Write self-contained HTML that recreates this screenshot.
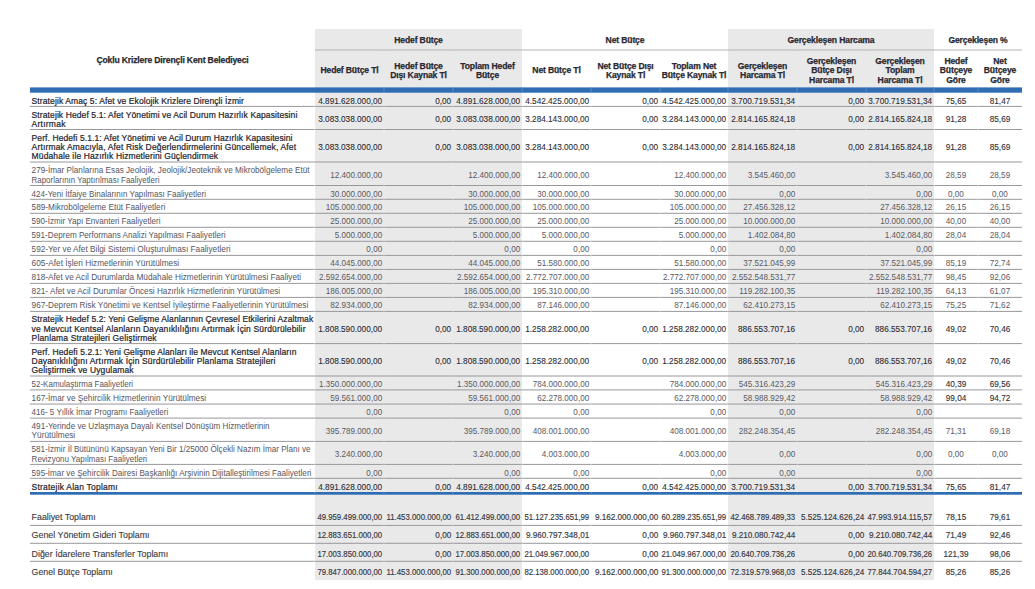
<!DOCTYPE html>
<html><head><meta charset="utf-8"><style>
html,body{margin:0;padding:0;background:#fff;width:1035px;height:589px;overflow:hidden}
svg{display:block;font-family:"Liberation Sans",sans-serif}
</style></head><body>
<svg width="1035" height="589" viewBox="0 0 1035 589" font-family="Liberation Sans, sans-serif">
<rect x="315" y="29" width="207" height="551" fill="#e9e9ea"/>
<rect x="728" y="29" width="206" height="551" fill="#e9e9ea"/>
<rect x="315" y="49.5" width="707" height="1" fill="#b4b4b8"/>
<rect x="383.65" y="49.5" width="0.7" height="1" fill="#e4e4e6"/>
<rect x="452.65" y="49.5" width="0.7" height="1" fill="#e4e4e6"/>
<rect x="521.65" y="49.5" width="0.7" height="1" fill="#e4e4e6"/>
<rect x="590.65" y="49.5" width="0.7" height="1" fill="#e4e4e6"/>
<rect x="659.65" y="49.5" width="0.7" height="1" fill="#e4e4e6"/>
<rect x="727.65" y="49.5" width="0.7" height="1" fill="#e4e4e6"/>
<rect x="796.65" y="49.5" width="0.7" height="1" fill="#e4e4e6"/>
<rect x="865.65" y="49.5" width="0.7" height="1" fill="#e4e4e6"/>
<rect x="933.65" y="49.5" width="0.7" height="1" fill="#e4e4e6"/>
<rect x="977.65" y="49.5" width="0.7" height="1" fill="#e4e4e6"/>
<rect x="30" y="87.4" width="992" height="5.3" fill="#2e6db4"/>
<rect x="383.5" y="87.4" width="1" height="5.3" fill="#5b8ac6"/>
<rect x="452.5" y="87.4" width="1" height="5.3" fill="#5b8ac6"/>
<rect x="521.5" y="87.4" width="1" height="5.3" fill="#5b8ac6"/>
<rect x="590.5" y="87.4" width="1" height="5.3" fill="#5b8ac6"/>
<rect x="659.5" y="87.4" width="1" height="5.3" fill="#5b8ac6"/>
<rect x="727.5" y="87.4" width="1" height="5.3" fill="#5b8ac6"/>
<rect x="796.5" y="87.4" width="1" height="5.3" fill="#5b8ac6"/>
<rect x="865.5" y="87.4" width="1" height="5.3" fill="#5b8ac6"/>
<rect x="933.5" y="87.4" width="1" height="5.3" fill="#5b8ac6"/>
<rect x="977.5" y="87.4" width="1" height="5.3" fill="#5b8ac6"/>
<rect x="30" y="105.9" width="992" height="1" fill="#98989c"/>
<rect x="314.65" y="105.9" width="0.7" height="1" fill="#e4e4e6"/>
<rect x="383.65" y="105.9" width="0.7" height="1" fill="#e4e4e6"/>
<rect x="452.65" y="105.9" width="0.7" height="1" fill="#e4e4e6"/>
<rect x="521.65" y="105.9" width="0.7" height="1" fill="#e4e4e6"/>
<rect x="590.65" y="105.9" width="0.7" height="1" fill="#e4e4e6"/>
<rect x="659.65" y="105.9" width="0.7" height="1" fill="#e4e4e6"/>
<rect x="727.65" y="105.9" width="0.7" height="1" fill="#e4e4e6"/>
<rect x="796.65" y="105.9" width="0.7" height="1" fill="#e4e4e6"/>
<rect x="865.65" y="105.9" width="0.7" height="1" fill="#e4e4e6"/>
<rect x="933.65" y="105.9" width="0.7" height="1" fill="#e4e4e6"/>
<rect x="977.65" y="105.9" width="0.7" height="1" fill="#e4e4e6"/>
<rect x="30" y="129.0" width="992" height="1" fill="#98989c"/>
<rect x="314.65" y="129.0" width="0.7" height="1" fill="#e4e4e6"/>
<rect x="383.65" y="129.0" width="0.7" height="1" fill="#e4e4e6"/>
<rect x="452.65" y="129.0" width="0.7" height="1" fill="#e4e4e6"/>
<rect x="521.65" y="129.0" width="0.7" height="1" fill="#e4e4e6"/>
<rect x="590.65" y="129.0" width="0.7" height="1" fill="#e4e4e6"/>
<rect x="659.65" y="129.0" width="0.7" height="1" fill="#e4e4e6"/>
<rect x="727.65" y="129.0" width="0.7" height="1" fill="#e4e4e6"/>
<rect x="796.65" y="129.0" width="0.7" height="1" fill="#e4e4e6"/>
<rect x="865.65" y="129.0" width="0.7" height="1" fill="#e4e4e6"/>
<rect x="933.65" y="129.0" width="0.7" height="1" fill="#e4e4e6"/>
<rect x="977.65" y="129.0" width="0.7" height="1" fill="#e4e4e6"/>
<rect x="30" y="161.5" width="992" height="1" fill="#98989c"/>
<rect x="314.65" y="161.5" width="0.7" height="1" fill="#e4e4e6"/>
<rect x="383.65" y="161.5" width="0.7" height="1" fill="#e4e4e6"/>
<rect x="452.65" y="161.5" width="0.7" height="1" fill="#e4e4e6"/>
<rect x="521.65" y="161.5" width="0.7" height="1" fill="#e4e4e6"/>
<rect x="590.65" y="161.5" width="0.7" height="1" fill="#e4e4e6"/>
<rect x="659.65" y="161.5" width="0.7" height="1" fill="#e4e4e6"/>
<rect x="727.65" y="161.5" width="0.7" height="1" fill="#e4e4e6"/>
<rect x="796.65" y="161.5" width="0.7" height="1" fill="#e4e4e6"/>
<rect x="865.65" y="161.5" width="0.7" height="1" fill="#e4e4e6"/>
<rect x="933.65" y="161.5" width="0.7" height="1" fill="#e4e4e6"/>
<rect x="977.65" y="161.5" width="0.7" height="1" fill="#e4e4e6"/>
<rect x="30" y="185.0" width="992" height="1" fill="#98989c"/>
<rect x="314.65" y="185.0" width="0.7" height="1" fill="#e4e4e6"/>
<rect x="383.65" y="185.0" width="0.7" height="1" fill="#e4e4e6"/>
<rect x="452.65" y="185.0" width="0.7" height="1" fill="#e4e4e6"/>
<rect x="521.65" y="185.0" width="0.7" height="1" fill="#e4e4e6"/>
<rect x="590.65" y="185.0" width="0.7" height="1" fill="#e4e4e6"/>
<rect x="659.65" y="185.0" width="0.7" height="1" fill="#e4e4e6"/>
<rect x="727.65" y="185.0" width="0.7" height="1" fill="#e4e4e6"/>
<rect x="796.65" y="185.0" width="0.7" height="1" fill="#e4e4e6"/>
<rect x="865.65" y="185.0" width="0.7" height="1" fill="#e4e4e6"/>
<rect x="933.65" y="185.0" width="0.7" height="1" fill="#e4e4e6"/>
<rect x="977.65" y="185.0" width="0.7" height="1" fill="#e4e4e6"/>
<rect x="30" y="198.8" width="992" height="1" fill="#98989c"/>
<rect x="314.65" y="198.8" width="0.7" height="1" fill="#e4e4e6"/>
<rect x="383.65" y="198.8" width="0.7" height="1" fill="#e4e4e6"/>
<rect x="452.65" y="198.8" width="0.7" height="1" fill="#e4e4e6"/>
<rect x="521.65" y="198.8" width="0.7" height="1" fill="#e4e4e6"/>
<rect x="590.65" y="198.8" width="0.7" height="1" fill="#e4e4e6"/>
<rect x="659.65" y="198.8" width="0.7" height="1" fill="#e4e4e6"/>
<rect x="727.65" y="198.8" width="0.7" height="1" fill="#e4e4e6"/>
<rect x="796.65" y="198.8" width="0.7" height="1" fill="#e4e4e6"/>
<rect x="865.65" y="198.8" width="0.7" height="1" fill="#e4e4e6"/>
<rect x="933.65" y="198.8" width="0.7" height="1" fill="#e4e4e6"/>
<rect x="977.65" y="198.8" width="0.7" height="1" fill="#e4e4e6"/>
<rect x="30" y="212.8" width="992" height="1" fill="#98989c"/>
<rect x="314.65" y="212.8" width="0.7" height="1" fill="#e4e4e6"/>
<rect x="383.65" y="212.8" width="0.7" height="1" fill="#e4e4e6"/>
<rect x="452.65" y="212.8" width="0.7" height="1" fill="#e4e4e6"/>
<rect x="521.65" y="212.8" width="0.7" height="1" fill="#e4e4e6"/>
<rect x="590.65" y="212.8" width="0.7" height="1" fill="#e4e4e6"/>
<rect x="659.65" y="212.8" width="0.7" height="1" fill="#e4e4e6"/>
<rect x="727.65" y="212.8" width="0.7" height="1" fill="#e4e4e6"/>
<rect x="796.65" y="212.8" width="0.7" height="1" fill="#e4e4e6"/>
<rect x="865.65" y="212.8" width="0.7" height="1" fill="#e4e4e6"/>
<rect x="933.65" y="212.8" width="0.7" height="1" fill="#e4e4e6"/>
<rect x="977.65" y="212.8" width="0.7" height="1" fill="#e4e4e6"/>
<rect x="30" y="226.8" width="992" height="1" fill="#98989c"/>
<rect x="314.65" y="226.8" width="0.7" height="1" fill="#e4e4e6"/>
<rect x="383.65" y="226.8" width="0.7" height="1" fill="#e4e4e6"/>
<rect x="452.65" y="226.8" width="0.7" height="1" fill="#e4e4e6"/>
<rect x="521.65" y="226.8" width="0.7" height="1" fill="#e4e4e6"/>
<rect x="590.65" y="226.8" width="0.7" height="1" fill="#e4e4e6"/>
<rect x="659.65" y="226.8" width="0.7" height="1" fill="#e4e4e6"/>
<rect x="727.65" y="226.8" width="0.7" height="1" fill="#e4e4e6"/>
<rect x="796.65" y="226.8" width="0.7" height="1" fill="#e4e4e6"/>
<rect x="865.65" y="226.8" width="0.7" height="1" fill="#e4e4e6"/>
<rect x="933.65" y="226.8" width="0.7" height="1" fill="#e4e4e6"/>
<rect x="977.65" y="226.8" width="0.7" height="1" fill="#e4e4e6"/>
<rect x="30" y="240.8" width="992" height="1" fill="#98989c"/>
<rect x="314.65" y="240.8" width="0.7" height="1" fill="#e4e4e6"/>
<rect x="383.65" y="240.8" width="0.7" height="1" fill="#e4e4e6"/>
<rect x="452.65" y="240.8" width="0.7" height="1" fill="#e4e4e6"/>
<rect x="521.65" y="240.8" width="0.7" height="1" fill="#e4e4e6"/>
<rect x="590.65" y="240.8" width="0.7" height="1" fill="#e4e4e6"/>
<rect x="659.65" y="240.8" width="0.7" height="1" fill="#e4e4e6"/>
<rect x="727.65" y="240.8" width="0.7" height="1" fill="#e4e4e6"/>
<rect x="796.65" y="240.8" width="0.7" height="1" fill="#e4e4e6"/>
<rect x="865.65" y="240.8" width="0.7" height="1" fill="#e4e4e6"/>
<rect x="933.65" y="240.8" width="0.7" height="1" fill="#e4e4e6"/>
<rect x="977.65" y="240.8" width="0.7" height="1" fill="#e4e4e6"/>
<rect x="30" y="254.9" width="992" height="1" fill="#98989c"/>
<rect x="314.65" y="254.9" width="0.7" height="1" fill="#e4e4e6"/>
<rect x="383.65" y="254.9" width="0.7" height="1" fill="#e4e4e6"/>
<rect x="452.65" y="254.9" width="0.7" height="1" fill="#e4e4e6"/>
<rect x="521.65" y="254.9" width="0.7" height="1" fill="#e4e4e6"/>
<rect x="590.65" y="254.9" width="0.7" height="1" fill="#e4e4e6"/>
<rect x="659.65" y="254.9" width="0.7" height="1" fill="#e4e4e6"/>
<rect x="727.65" y="254.9" width="0.7" height="1" fill="#e4e4e6"/>
<rect x="796.65" y="254.9" width="0.7" height="1" fill="#e4e4e6"/>
<rect x="865.65" y="254.9" width="0.7" height="1" fill="#e4e4e6"/>
<rect x="933.65" y="254.9" width="0.7" height="1" fill="#e4e4e6"/>
<rect x="977.65" y="254.9" width="0.7" height="1" fill="#e4e4e6"/>
<rect x="30" y="268.9" width="992" height="1" fill="#98989c"/>
<rect x="314.65" y="268.9" width="0.7" height="1" fill="#e4e4e6"/>
<rect x="383.65" y="268.9" width="0.7" height="1" fill="#e4e4e6"/>
<rect x="452.65" y="268.9" width="0.7" height="1" fill="#e4e4e6"/>
<rect x="521.65" y="268.9" width="0.7" height="1" fill="#e4e4e6"/>
<rect x="590.65" y="268.9" width="0.7" height="1" fill="#e4e4e6"/>
<rect x="659.65" y="268.9" width="0.7" height="1" fill="#e4e4e6"/>
<rect x="727.65" y="268.9" width="0.7" height="1" fill="#e4e4e6"/>
<rect x="796.65" y="268.9" width="0.7" height="1" fill="#e4e4e6"/>
<rect x="865.65" y="268.9" width="0.7" height="1" fill="#e4e4e6"/>
<rect x="933.65" y="268.9" width="0.7" height="1" fill="#e4e4e6"/>
<rect x="977.65" y="268.9" width="0.7" height="1" fill="#e4e4e6"/>
<rect x="30" y="282.9" width="992" height="1" fill="#98989c"/>
<rect x="314.65" y="282.9" width="0.7" height="1" fill="#e4e4e6"/>
<rect x="383.65" y="282.9" width="0.7" height="1" fill="#e4e4e6"/>
<rect x="452.65" y="282.9" width="0.7" height="1" fill="#e4e4e6"/>
<rect x="521.65" y="282.9" width="0.7" height="1" fill="#e4e4e6"/>
<rect x="590.65" y="282.9" width="0.7" height="1" fill="#e4e4e6"/>
<rect x="659.65" y="282.9" width="0.7" height="1" fill="#e4e4e6"/>
<rect x="727.65" y="282.9" width="0.7" height="1" fill="#e4e4e6"/>
<rect x="796.65" y="282.9" width="0.7" height="1" fill="#e4e4e6"/>
<rect x="865.65" y="282.9" width="0.7" height="1" fill="#e4e4e6"/>
<rect x="933.65" y="282.9" width="0.7" height="1" fill="#e4e4e6"/>
<rect x="977.65" y="282.9" width="0.7" height="1" fill="#e4e4e6"/>
<rect x="30" y="296.9" width="992" height="1" fill="#98989c"/>
<rect x="314.65" y="296.9" width="0.7" height="1" fill="#e4e4e6"/>
<rect x="383.65" y="296.9" width="0.7" height="1" fill="#e4e4e6"/>
<rect x="452.65" y="296.9" width="0.7" height="1" fill="#e4e4e6"/>
<rect x="521.65" y="296.9" width="0.7" height="1" fill="#e4e4e6"/>
<rect x="590.65" y="296.9" width="0.7" height="1" fill="#e4e4e6"/>
<rect x="659.65" y="296.9" width="0.7" height="1" fill="#e4e4e6"/>
<rect x="727.65" y="296.9" width="0.7" height="1" fill="#e4e4e6"/>
<rect x="796.65" y="296.9" width="0.7" height="1" fill="#e4e4e6"/>
<rect x="865.65" y="296.9" width="0.7" height="1" fill="#e4e4e6"/>
<rect x="933.65" y="296.9" width="0.7" height="1" fill="#e4e4e6"/>
<rect x="977.65" y="296.9" width="0.7" height="1" fill="#e4e4e6"/>
<rect x="30" y="310.9" width="992" height="1" fill="#98989c"/>
<rect x="314.65" y="310.9" width="0.7" height="1" fill="#e4e4e6"/>
<rect x="383.65" y="310.9" width="0.7" height="1" fill="#e4e4e6"/>
<rect x="452.65" y="310.9" width="0.7" height="1" fill="#e4e4e6"/>
<rect x="521.65" y="310.9" width="0.7" height="1" fill="#e4e4e6"/>
<rect x="590.65" y="310.9" width="0.7" height="1" fill="#e4e4e6"/>
<rect x="659.65" y="310.9" width="0.7" height="1" fill="#e4e4e6"/>
<rect x="727.65" y="310.9" width="0.7" height="1" fill="#e4e4e6"/>
<rect x="796.65" y="310.9" width="0.7" height="1" fill="#e4e4e6"/>
<rect x="865.65" y="310.9" width="0.7" height="1" fill="#e4e4e6"/>
<rect x="933.65" y="310.9" width="0.7" height="1" fill="#e4e4e6"/>
<rect x="977.65" y="310.9" width="0.7" height="1" fill="#e4e4e6"/>
<rect x="30" y="343.1" width="992" height="1" fill="#98989c"/>
<rect x="314.65" y="343.1" width="0.7" height="1" fill="#e4e4e6"/>
<rect x="383.65" y="343.1" width="0.7" height="1" fill="#e4e4e6"/>
<rect x="452.65" y="343.1" width="0.7" height="1" fill="#e4e4e6"/>
<rect x="521.65" y="343.1" width="0.7" height="1" fill="#e4e4e6"/>
<rect x="590.65" y="343.1" width="0.7" height="1" fill="#e4e4e6"/>
<rect x="659.65" y="343.1" width="0.7" height="1" fill="#e4e4e6"/>
<rect x="727.65" y="343.1" width="0.7" height="1" fill="#e4e4e6"/>
<rect x="796.65" y="343.1" width="0.7" height="1" fill="#e4e4e6"/>
<rect x="865.65" y="343.1" width="0.7" height="1" fill="#e4e4e6"/>
<rect x="933.65" y="343.1" width="0.7" height="1" fill="#e4e4e6"/>
<rect x="977.65" y="343.1" width="0.7" height="1" fill="#e4e4e6"/>
<rect x="30" y="375.5" width="992" height="1" fill="#98989c"/>
<rect x="314.65" y="375.5" width="0.7" height="1" fill="#e4e4e6"/>
<rect x="383.65" y="375.5" width="0.7" height="1" fill="#e4e4e6"/>
<rect x="452.65" y="375.5" width="0.7" height="1" fill="#e4e4e6"/>
<rect x="521.65" y="375.5" width="0.7" height="1" fill="#e4e4e6"/>
<rect x="590.65" y="375.5" width="0.7" height="1" fill="#e4e4e6"/>
<rect x="659.65" y="375.5" width="0.7" height="1" fill="#e4e4e6"/>
<rect x="727.65" y="375.5" width="0.7" height="1" fill="#e4e4e6"/>
<rect x="796.65" y="375.5" width="0.7" height="1" fill="#e4e4e6"/>
<rect x="865.65" y="375.5" width="0.7" height="1" fill="#e4e4e6"/>
<rect x="933.65" y="375.5" width="0.7" height="1" fill="#e4e4e6"/>
<rect x="977.65" y="375.5" width="0.7" height="1" fill="#e4e4e6"/>
<rect x="30" y="389.4" width="992" height="1" fill="#98989c"/>
<rect x="314.65" y="389.4" width="0.7" height="1" fill="#e4e4e6"/>
<rect x="383.65" y="389.4" width="0.7" height="1" fill="#e4e4e6"/>
<rect x="452.65" y="389.4" width="0.7" height="1" fill="#e4e4e6"/>
<rect x="521.65" y="389.4" width="0.7" height="1" fill="#e4e4e6"/>
<rect x="590.65" y="389.4" width="0.7" height="1" fill="#e4e4e6"/>
<rect x="659.65" y="389.4" width="0.7" height="1" fill="#e4e4e6"/>
<rect x="727.65" y="389.4" width="0.7" height="1" fill="#e4e4e6"/>
<rect x="796.65" y="389.4" width="0.7" height="1" fill="#e4e4e6"/>
<rect x="865.65" y="389.4" width="0.7" height="1" fill="#e4e4e6"/>
<rect x="933.65" y="389.4" width="0.7" height="1" fill="#e4e4e6"/>
<rect x="977.65" y="389.4" width="0.7" height="1" fill="#e4e4e6"/>
<rect x="30" y="403.55" width="992" height="1" fill="#98989c"/>
<rect x="314.65" y="403.55" width="0.7" height="1" fill="#e4e4e6"/>
<rect x="383.65" y="403.55" width="0.7" height="1" fill="#e4e4e6"/>
<rect x="452.65" y="403.55" width="0.7" height="1" fill="#e4e4e6"/>
<rect x="521.65" y="403.55" width="0.7" height="1" fill="#e4e4e6"/>
<rect x="590.65" y="403.55" width="0.7" height="1" fill="#e4e4e6"/>
<rect x="659.65" y="403.55" width="0.7" height="1" fill="#e4e4e6"/>
<rect x="727.65" y="403.55" width="0.7" height="1" fill="#e4e4e6"/>
<rect x="796.65" y="403.55" width="0.7" height="1" fill="#e4e4e6"/>
<rect x="865.65" y="403.55" width="0.7" height="1" fill="#e4e4e6"/>
<rect x="933.65" y="403.55" width="0.7" height="1" fill="#e4e4e6"/>
<rect x="977.65" y="403.55" width="0.7" height="1" fill="#e4e4e6"/>
<rect x="30" y="417.6" width="992" height="1" fill="#98989c"/>
<rect x="314.65" y="417.6" width="0.7" height="1" fill="#e4e4e6"/>
<rect x="383.65" y="417.6" width="0.7" height="1" fill="#e4e4e6"/>
<rect x="452.65" y="417.6" width="0.7" height="1" fill="#e4e4e6"/>
<rect x="521.65" y="417.6" width="0.7" height="1" fill="#e4e4e6"/>
<rect x="590.65" y="417.6" width="0.7" height="1" fill="#e4e4e6"/>
<rect x="659.65" y="417.6" width="0.7" height="1" fill="#e4e4e6"/>
<rect x="727.65" y="417.6" width="0.7" height="1" fill="#e4e4e6"/>
<rect x="796.65" y="417.6" width="0.7" height="1" fill="#e4e4e6"/>
<rect x="865.65" y="417.6" width="0.7" height="1" fill="#e4e4e6"/>
<rect x="933.65" y="417.6" width="0.7" height="1" fill="#e4e4e6"/>
<rect x="977.65" y="417.6" width="0.7" height="1" fill="#e4e4e6"/>
<rect x="30" y="440.9" width="992" height="1" fill="#98989c"/>
<rect x="314.65" y="440.9" width="0.7" height="1" fill="#e4e4e6"/>
<rect x="383.65" y="440.9" width="0.7" height="1" fill="#e4e4e6"/>
<rect x="452.65" y="440.9" width="0.7" height="1" fill="#e4e4e6"/>
<rect x="521.65" y="440.9" width="0.7" height="1" fill="#e4e4e6"/>
<rect x="590.65" y="440.9" width="0.7" height="1" fill="#e4e4e6"/>
<rect x="659.65" y="440.9" width="0.7" height="1" fill="#e4e4e6"/>
<rect x="727.65" y="440.9" width="0.7" height="1" fill="#e4e4e6"/>
<rect x="796.65" y="440.9" width="0.7" height="1" fill="#e4e4e6"/>
<rect x="865.65" y="440.9" width="0.7" height="1" fill="#e4e4e6"/>
<rect x="933.65" y="440.9" width="0.7" height="1" fill="#e4e4e6"/>
<rect x="977.65" y="440.9" width="0.7" height="1" fill="#e4e4e6"/>
<rect x="30" y="463.9" width="992" height="1" fill="#98989c"/>
<rect x="314.65" y="463.9" width="0.7" height="1" fill="#e4e4e6"/>
<rect x="383.65" y="463.9" width="0.7" height="1" fill="#e4e4e6"/>
<rect x="452.65" y="463.9" width="0.7" height="1" fill="#e4e4e6"/>
<rect x="521.65" y="463.9" width="0.7" height="1" fill="#e4e4e6"/>
<rect x="590.65" y="463.9" width="0.7" height="1" fill="#e4e4e6"/>
<rect x="659.65" y="463.9" width="0.7" height="1" fill="#e4e4e6"/>
<rect x="727.65" y="463.9" width="0.7" height="1" fill="#e4e4e6"/>
<rect x="796.65" y="463.9" width="0.7" height="1" fill="#e4e4e6"/>
<rect x="865.65" y="463.9" width="0.7" height="1" fill="#e4e4e6"/>
<rect x="933.65" y="463.9" width="0.7" height="1" fill="#e4e4e6"/>
<rect x="977.65" y="463.9" width="0.7" height="1" fill="#e4e4e6"/>
<rect x="30" y="477.8" width="992" height="1" fill="#98989c"/>
<rect x="314.65" y="477.8" width="0.7" height="1" fill="#e4e4e6"/>
<rect x="383.65" y="477.8" width="0.7" height="1" fill="#e4e4e6"/>
<rect x="452.65" y="477.8" width="0.7" height="1" fill="#e4e4e6"/>
<rect x="521.65" y="477.8" width="0.7" height="1" fill="#e4e4e6"/>
<rect x="590.65" y="477.8" width="0.7" height="1" fill="#e4e4e6"/>
<rect x="659.65" y="477.8" width="0.7" height="1" fill="#e4e4e6"/>
<rect x="727.65" y="477.8" width="0.7" height="1" fill="#e4e4e6"/>
<rect x="796.65" y="477.8" width="0.7" height="1" fill="#e4e4e6"/>
<rect x="865.65" y="477.8" width="0.7" height="1" fill="#e4e4e6"/>
<rect x="933.65" y="477.8" width="0.7" height="1" fill="#e4e4e6"/>
<rect x="977.65" y="477.8" width="0.7" height="1" fill="#e4e4e6"/>
<rect x="30" y="524.9" width="992" height="1" fill="#98989c"/>
<rect x="314.65" y="524.9" width="0.7" height="1" fill="#e4e4e6"/>
<rect x="383.65" y="524.9" width="0.7" height="1" fill="#e4e4e6"/>
<rect x="452.65" y="524.9" width="0.7" height="1" fill="#e4e4e6"/>
<rect x="521.65" y="524.9" width="0.7" height="1" fill="#e4e4e6"/>
<rect x="590.65" y="524.9" width="0.7" height="1" fill="#e4e4e6"/>
<rect x="659.65" y="524.9" width="0.7" height="1" fill="#e4e4e6"/>
<rect x="727.65" y="524.9" width="0.7" height="1" fill="#e4e4e6"/>
<rect x="796.65" y="524.9" width="0.7" height="1" fill="#e4e4e6"/>
<rect x="865.65" y="524.9" width="0.7" height="1" fill="#e4e4e6"/>
<rect x="933.65" y="524.9" width="0.7" height="1" fill="#e4e4e6"/>
<rect x="977.65" y="524.9" width="0.7" height="1" fill="#e4e4e6"/>
<rect x="30" y="542.8" width="992" height="1" fill="#98989c"/>
<rect x="314.65" y="542.8" width="0.7" height="1" fill="#e4e4e6"/>
<rect x="383.65" y="542.8" width="0.7" height="1" fill="#e4e4e6"/>
<rect x="452.65" y="542.8" width="0.7" height="1" fill="#e4e4e6"/>
<rect x="521.65" y="542.8" width="0.7" height="1" fill="#e4e4e6"/>
<rect x="590.65" y="542.8" width="0.7" height="1" fill="#e4e4e6"/>
<rect x="659.65" y="542.8" width="0.7" height="1" fill="#e4e4e6"/>
<rect x="727.65" y="542.8" width="0.7" height="1" fill="#e4e4e6"/>
<rect x="796.65" y="542.8" width="0.7" height="1" fill="#e4e4e6"/>
<rect x="865.65" y="542.8" width="0.7" height="1" fill="#e4e4e6"/>
<rect x="933.65" y="542.8" width="0.7" height="1" fill="#e4e4e6"/>
<rect x="977.65" y="542.8" width="0.7" height="1" fill="#e4e4e6"/>
<rect x="30" y="560.8" width="992" height="1" fill="#98989c"/>
<rect x="314.65" y="560.8" width="0.7" height="1" fill="#e4e4e6"/>
<rect x="383.65" y="560.8" width="0.7" height="1" fill="#e4e4e6"/>
<rect x="452.65" y="560.8" width="0.7" height="1" fill="#e4e4e6"/>
<rect x="521.65" y="560.8" width="0.7" height="1" fill="#e4e4e6"/>
<rect x="590.65" y="560.8" width="0.7" height="1" fill="#e4e4e6"/>
<rect x="659.65" y="560.8" width="0.7" height="1" fill="#e4e4e6"/>
<rect x="727.65" y="560.8" width="0.7" height="1" fill="#e4e4e6"/>
<rect x="796.65" y="560.8" width="0.7" height="1" fill="#e4e4e6"/>
<rect x="865.65" y="560.8" width="0.7" height="1" fill="#e4e4e6"/>
<rect x="933.65" y="560.8" width="0.7" height="1" fill="#e4e4e6"/>
<rect x="977.65" y="560.8" width="0.7" height="1" fill="#e4e4e6"/>
<rect x="30" y="492" width="992" height="2.7" fill="#2e6db4"/>
<rect x="314.6" y="492" width="0.8" height="2.7" fill="#5b8ac6"/>
<rect x="383.6" y="492" width="0.8" height="2.7" fill="#5b8ac6"/>
<rect x="452.6" y="492" width="0.8" height="2.7" fill="#5b8ac6"/>
<rect x="521.6" y="492" width="0.8" height="2.7" fill="#5b8ac6"/>
<rect x="590.6" y="492" width="0.8" height="2.7" fill="#5b8ac6"/>
<rect x="659.6" y="492" width="0.8" height="2.7" fill="#5b8ac6"/>
<rect x="727.6" y="492" width="0.8" height="2.7" fill="#5b8ac6"/>
<rect x="796.6" y="492" width="0.8" height="2.7" fill="#5b8ac6"/>
<rect x="865.6" y="492" width="0.8" height="2.7" fill="#5b8ac6"/>
<rect x="933.6" y="492" width="0.8" height="2.7" fill="#5b8ac6"/>
<rect x="977.6" y="492" width="0.8" height="2.7" fill="#5b8ac6"/>
<text x="172.50" y="63" font-size="8.6" fill="#2a2a32" text-anchor="middle" font-weight="bold" stroke="#2a2a32" stroke-width="0.25" letter-spacing="-0.15">Çoklu Krizlere Dirençli Kent Belediyeci</text>
<text x="418.50" y="43" font-size="8.6" fill="#2a2a32" text-anchor="middle" font-weight="bold" stroke="#2a2a32" stroke-width="0.25" letter-spacing="-0.15">Hedef Bütçe</text>
<text x="625.00" y="43" font-size="8.6" fill="#2a2a32" text-anchor="middle" font-weight="bold" stroke="#2a2a32" stroke-width="0.25" letter-spacing="-0.15">Net Bütçe</text>
<text x="831.00" y="43" font-size="8.6" fill="#2a2a32" text-anchor="middle" font-weight="bold" stroke="#2a2a32" stroke-width="0.25" letter-spacing="-0.15">Gerçekleşen Harcama</text>
<text x="978.00" y="43" font-size="8.6" fill="#2a2a32" text-anchor="middle" font-weight="bold" stroke="#2a2a32" stroke-width="0.25" letter-spacing="-0.15">Gerçekleşen %</text>
<text x="349.50" y="73" font-size="8.6" fill="#2a2a32" text-anchor="middle" font-weight="bold" stroke="#2a2a32" stroke-width="0.25" letter-spacing="-0.15">Hedef Bütçe Tl</text>
<text x="418.50" y="69" font-size="8.6" fill="#2a2a32" text-anchor="middle" font-weight="bold" stroke="#2a2a32" stroke-width="0.25" letter-spacing="-0.15">Hedef Bütçe</text>
<text x="418.50" y="78" font-size="8.6" fill="#2a2a32" text-anchor="middle" font-weight="bold" stroke="#2a2a32" stroke-width="0.25" letter-spacing="-0.15">Dışı Kaynak Tl</text>
<text x="487.50" y="69" font-size="8.6" fill="#2a2a32" text-anchor="middle" font-weight="bold" stroke="#2a2a32" stroke-width="0.25" letter-spacing="-0.15">Toplam Hedef</text>
<text x="487.50" y="78" font-size="8.6" fill="#2a2a32" text-anchor="middle" font-weight="bold" stroke="#2a2a32" stroke-width="0.25" letter-spacing="-0.15">Bütçe</text>
<text x="556.50" y="73" font-size="8.6" fill="#2a2a32" text-anchor="middle" font-weight="bold" stroke="#2a2a32" stroke-width="0.25" letter-spacing="-0.15">Net Bütçe Tl</text>
<text x="625.50" y="69" font-size="8.6" fill="#2a2a32" text-anchor="middle" font-weight="bold" stroke="#2a2a32" stroke-width="0.25" letter-spacing="-0.15">Net Bütçe Dışı</text>
<text x="625.50" y="78" font-size="8.6" fill="#2a2a32" text-anchor="middle" font-weight="bold" stroke="#2a2a32" stroke-width="0.25" letter-spacing="-0.15">Kaynak Tl</text>
<text x="694.00" y="69" font-size="8.6" fill="#2a2a32" text-anchor="middle" font-weight="bold" stroke="#2a2a32" stroke-width="0.25" letter-spacing="-0.15">Toplam Net</text>
<text x="694.00" y="78" font-size="8.6" fill="#2a2a32" text-anchor="middle" font-weight="bold" stroke="#2a2a32" stroke-width="0.25" letter-spacing="-0.15">Bütçe Kaynak Tl</text>
<text x="762.50" y="69" font-size="8.6" fill="#2a2a32" text-anchor="middle" font-weight="bold" stroke="#2a2a32" stroke-width="0.25" letter-spacing="-0.15">Gerçekleşen</text>
<text x="762.50" y="78" font-size="8.6" fill="#2a2a32" text-anchor="middle" font-weight="bold" stroke="#2a2a32" stroke-width="0.25" letter-spacing="-0.15">Harcama Tl</text>
<text x="831.50" y="64" font-size="8.6" fill="#2a2a32" text-anchor="middle" font-weight="bold" stroke="#2a2a32" stroke-width="0.25" letter-spacing="-0.15">Gerçekleşen</text>
<text x="831.50" y="73" font-size="8.6" fill="#2a2a32" text-anchor="middle" font-weight="bold" stroke="#2a2a32" stroke-width="0.25" letter-spacing="-0.15">Bütçe Dışı</text>
<text x="831.50" y="83" font-size="8.6" fill="#2a2a32" text-anchor="middle" font-weight="bold" stroke="#2a2a32" stroke-width="0.25" letter-spacing="-0.15">Harcama Tl</text>
<text x="900.00" y="64" font-size="8.6" fill="#2a2a32" text-anchor="middle" font-weight="bold" stroke="#2a2a32" stroke-width="0.25" letter-spacing="-0.15">Gerçekleşen</text>
<text x="900.00" y="73" font-size="8.6" fill="#2a2a32" text-anchor="middle" font-weight="bold" stroke="#2a2a32" stroke-width="0.25" letter-spacing="-0.15">Toplam</text>
<text x="900.00" y="83" font-size="8.6" fill="#2a2a32" text-anchor="middle" font-weight="bold" stroke="#2a2a32" stroke-width="0.25" letter-spacing="-0.15">Harcama Tl</text>
<text x="956.00" y="64" font-size="8.6" fill="#2a2a32" text-anchor="middle" font-weight="bold" stroke="#2a2a32" stroke-width="0.25" letter-spacing="-0.15">Hedef</text>
<text x="956.00" y="73" font-size="8.6" fill="#2a2a32" text-anchor="middle" font-weight="bold" stroke="#2a2a32" stroke-width="0.25" letter-spacing="-0.15">Bütçeye</text>
<text x="956.00" y="83" font-size="8.6" fill="#2a2a32" text-anchor="middle" font-weight="bold" stroke="#2a2a32" stroke-width="0.25" letter-spacing="-0.15">Göre</text>
<text x="1000.00" y="64" font-size="8.6" fill="#2a2a32" text-anchor="middle" font-weight="bold" stroke="#2a2a32" stroke-width="0.25" letter-spacing="-0.15">Net</text>
<text x="1000.00" y="73" font-size="8.6" fill="#2a2a32" text-anchor="middle" font-weight="bold" stroke="#2a2a32" stroke-width="0.25" letter-spacing="-0.15">Bütçeye</text>
<text x="1000.00" y="83" font-size="8.6" fill="#2a2a32" text-anchor="middle" font-weight="bold" stroke="#2a2a32" stroke-width="0.25" letter-spacing="-0.15">Göre</text>
<text x="31.60" y="104" font-size="8.5" fill="#26262e" stroke="#26262e" stroke-width="0.22" textLength="212.30" lengthAdjust="spacing">Stratejik Amaç 5: Afet ve Ekolojik Krizlere Dirençli İzmir</text>
<text x="382.20" y="104" font-size="8.23" fill="#2d2d35" text-anchor="end" stroke="#2d2d35" stroke-width="0.1">4.891.628.000,00</text>
<text x="451.20" y="104" font-size="8.23" fill="#2d2d35" text-anchor="end" stroke="#2d2d35" stroke-width="0.1">0,00</text>
<text x="520.20" y="104" font-size="8.23" fill="#2d2d35" text-anchor="end" stroke="#2d2d35" stroke-width="0.1">4.891.628.000,00</text>
<text x="589.20" y="104" font-size="8.23" fill="#2d2d35" text-anchor="end" stroke="#2d2d35" stroke-width="0.1">4.542.425.000,00</text>
<text x="658.20" y="104" font-size="8.23" fill="#2d2d35" text-anchor="end" stroke="#2d2d35" stroke-width="0.1">0,00</text>
<text x="726.20" y="104" font-size="8.23" fill="#2d2d35" text-anchor="end" stroke="#2d2d35" stroke-width="0.1">4.542.425.000,00</text>
<text x="795.20" y="104" font-size="8.23" fill="#2d2d35" text-anchor="end" stroke="#2d2d35" stroke-width="0.1">3.700.719.531,34</text>
<text x="864.20" y="104" font-size="8.23" fill="#2d2d35" text-anchor="end" stroke="#2d2d35" stroke-width="0.1">0,00</text>
<text x="932.20" y="104" font-size="8.23" fill="#2d2d35" text-anchor="end" stroke="#2d2d35" stroke-width="0.1">3.700.719.531,34</text>
<text x="956.00" y="104" font-size="8.23" fill="#2d2d35" text-anchor="middle" stroke="#2d2d35" stroke-width="0.1">75,65</text>
<text x="1000.00" y="104" font-size="8.23" fill="#2d2d35" text-anchor="middle" stroke="#2d2d35" stroke-width="0.1">81,47</text>
<text x="31.60" y="118" font-size="8.5" fill="#26262e" stroke="#26262e" stroke-width="0.22" textLength="265.70" lengthAdjust="spacing">Stratejik Hedef 5.1: Afet Yönetimi ve Acil Durum Hazırlık Kapasitesini</text>
<text x="31.60" y="127" font-size="8.5" fill="#26262e" stroke="#26262e" stroke-width="0.22" textLength="33.80" lengthAdjust="spacing">Artırmak</text>
<text x="382.20" y="122" font-size="8.23" fill="#2d2d35" text-anchor="end" stroke="#2d2d35" stroke-width="0.1">3.083.038.000,00</text>
<text x="451.20" y="122" font-size="8.23" fill="#2d2d35" text-anchor="end" stroke="#2d2d35" stroke-width="0.1">0,00</text>
<text x="520.20" y="122" font-size="8.23" fill="#2d2d35" text-anchor="end" stroke="#2d2d35" stroke-width="0.1">3.083.038.000,00</text>
<text x="589.20" y="122" font-size="8.23" fill="#2d2d35" text-anchor="end" stroke="#2d2d35" stroke-width="0.1">3.284.143.000,00</text>
<text x="658.20" y="122" font-size="8.23" fill="#2d2d35" text-anchor="end" stroke="#2d2d35" stroke-width="0.1">0,00</text>
<text x="726.20" y="122" font-size="8.23" fill="#2d2d35" text-anchor="end" stroke="#2d2d35" stroke-width="0.1">3.284.143.000,00</text>
<text x="795.20" y="122" font-size="8.23" fill="#2d2d35" text-anchor="end" stroke="#2d2d35" stroke-width="0.1">2.814.165.824,18</text>
<text x="864.20" y="122" font-size="8.23" fill="#2d2d35" text-anchor="end" stroke="#2d2d35" stroke-width="0.1">0,00</text>
<text x="932.20" y="122" font-size="8.23" fill="#2d2d35" text-anchor="end" stroke="#2d2d35" stroke-width="0.1">2.814.165.824,18</text>
<text x="956.00" y="122" font-size="8.23" fill="#2d2d35" text-anchor="middle" stroke="#2d2d35" stroke-width="0.1">91,28</text>
<text x="1000.00" y="122" font-size="8.23" fill="#2d2d35" text-anchor="middle" stroke="#2d2d35" stroke-width="0.1">85,69</text>
<text x="31.60" y="141" font-size="8.5" fill="#26262e" stroke="#26262e" stroke-width="0.22" textLength="260.80" lengthAdjust="spacing">Perf. Hedefi 5.1.1: Afet Yönetimi ve Acil Durum Hazırlık Kapasitesini</text>
<text x="31.60" y="150" font-size="8.5" fill="#26262e" stroke="#26262e" stroke-width="0.22" textLength="264.50" lengthAdjust="spacing">Artırmak Amacıyla, Afet Risk Değerlendirmelerini Güncellemek, Afet</text>
<text x="31.60" y="159" font-size="8.5" fill="#26262e" stroke="#26262e" stroke-width="0.22" textLength="186.40" lengthAdjust="spacing">Müdahale ile Hazırlık Hizmetlerini Güçlendirmek</text>
<text x="382.20" y="150" font-size="8.23" fill="#2d2d35" text-anchor="end" stroke="#2d2d35" stroke-width="0.1">3.083.038.000,00</text>
<text x="451.20" y="150" font-size="8.23" fill="#2d2d35" text-anchor="end" stroke="#2d2d35" stroke-width="0.1">0,00</text>
<text x="520.20" y="150" font-size="8.23" fill="#2d2d35" text-anchor="end" stroke="#2d2d35" stroke-width="0.1">3.083.038.000,00</text>
<text x="589.20" y="150" font-size="8.23" fill="#2d2d35" text-anchor="end" stroke="#2d2d35" stroke-width="0.1">3.284.143.000,00</text>
<text x="658.20" y="150" font-size="8.23" fill="#2d2d35" text-anchor="end" stroke="#2d2d35" stroke-width="0.1">0,00</text>
<text x="726.20" y="150" font-size="8.23" fill="#2d2d35" text-anchor="end" stroke="#2d2d35" stroke-width="0.1">3.284.143.000,00</text>
<text x="795.20" y="150" font-size="8.23" fill="#2d2d35" text-anchor="end" stroke="#2d2d35" stroke-width="0.1">2.814.165.824,18</text>
<text x="864.20" y="150" font-size="8.23" fill="#2d2d35" text-anchor="end" stroke="#2d2d35" stroke-width="0.1">0,00</text>
<text x="932.20" y="150" font-size="8.23" fill="#2d2d35" text-anchor="end" stroke="#2d2d35" stroke-width="0.1">2.814.165.824,18</text>
<text x="956.00" y="150" font-size="8.23" fill="#2d2d35" text-anchor="middle" stroke="#2d2d35" stroke-width="0.1">91,28</text>
<text x="1000.00" y="150" font-size="8.23" fill="#2d2d35" text-anchor="middle" stroke="#2d2d35" stroke-width="0.1">85,69</text>
<text x="31.60" y="173" font-size="8.15" fill="#55555f" textLength="277.90" lengthAdjust="spacingAndGlyphs">279-İmar Planlarına Esas Jeolojik, Jeolojik/Jeoteknik ve Mikrobölgeleme Etüt</text>
<text x="31.60" y="183" font-size="8.15" fill="#55555f" textLength="127.80" lengthAdjust="spacingAndGlyphs">Raporlarının Yaptırılması Faaliyetleri</text>
<text x="382.20" y="178" font-size="8.15" fill="#5a5a62" text-anchor="end">12.400.000,00</text>
<text x="520.20" y="178" font-size="8.15" fill="#5a5a62" text-anchor="end">12.400.000,00</text>
<text x="589.20" y="178" font-size="8.15" fill="#5a5a62" text-anchor="end">12.400.000,00</text>
<text x="726.20" y="178" font-size="8.15" fill="#5a5a62" text-anchor="end">12.400.000,00</text>
<text x="795.20" y="178" font-size="8.15" fill="#5a5a62" text-anchor="end">3.545.460,00</text>
<text x="932.20" y="178" font-size="8.15" fill="#5a5a62" text-anchor="end">3.545.460,00</text>
<text x="956.00" y="178" font-size="8.15" fill="#5a5a62" text-anchor="middle">28,59</text>
<text x="1000.00" y="178" font-size="8.15" fill="#5a5a62" text-anchor="middle">28,59</text>
<text x="31.60" y="197" font-size="8.15" fill="#55555f" textLength="174.40" lengthAdjust="spacingAndGlyphs">424-Yeni İtfaiye Binalarının Yapılması Faaliyetleri</text>
<text x="382.20" y="197" font-size="8.15" fill="#5a5a62" text-anchor="end">30.000.000,00</text>
<text x="520.20" y="197" font-size="8.15" fill="#5a5a62" text-anchor="end">30.000.000,00</text>
<text x="589.20" y="197" font-size="8.15" fill="#5a5a62" text-anchor="end">30.000.000,00</text>
<text x="726.20" y="197" font-size="8.15" fill="#5a5a62" text-anchor="end">30.000.000,00</text>
<text x="795.20" y="197" font-size="8.15" fill="#5a5a62" text-anchor="end">0,00</text>
<text x="932.20" y="197" font-size="8.15" fill="#5a5a62" text-anchor="end">0,00</text>
<text x="956.00" y="197" font-size="8.15" fill="#5a5a62" text-anchor="middle">0,00</text>
<text x="1000.00" y="197" font-size="8.15" fill="#5a5a62" text-anchor="middle">0,00</text>
<text x="31.60" y="210" font-size="8.15" fill="#55555f" textLength="133.65" lengthAdjust="spacingAndGlyphs">589-Mikrobölgeleme Etüt Faaliyetleri</text>
<text x="382.20" y="210" font-size="8.15" fill="#5a5a62" text-anchor="end">105.000.000,00</text>
<text x="520.20" y="210" font-size="8.15" fill="#5a5a62" text-anchor="end">105.000.000,00</text>
<text x="589.20" y="210" font-size="8.15" fill="#5a5a62" text-anchor="end">105.000.000,00</text>
<text x="726.20" y="210" font-size="8.15" fill="#5a5a62" text-anchor="end">105.000.000,00</text>
<text x="795.20" y="210" font-size="8.15" fill="#5a5a62" text-anchor="end">27.456.328,12</text>
<text x="932.20" y="210" font-size="8.15" fill="#5a5a62" text-anchor="end">27.456.328,12</text>
<text x="956.00" y="210" font-size="8.15" fill="#5a5a62" text-anchor="middle">26,15</text>
<text x="1000.00" y="210" font-size="8.15" fill="#5a5a62" text-anchor="middle">26,15</text>
<text x="31.60" y="224" font-size="8.15" fill="#55555f" textLength="128.90" lengthAdjust="spacingAndGlyphs">590-İzmir Yapı Envanteri Faaliyetleri</text>
<text x="382.20" y="224" font-size="8.15" fill="#5a5a62" text-anchor="end">25.000.000,00</text>
<text x="520.20" y="224" font-size="8.15" fill="#5a5a62" text-anchor="end">25.000.000,00</text>
<text x="589.20" y="224" font-size="8.15" fill="#5a5a62" text-anchor="end">25.000.000,00</text>
<text x="726.20" y="224" font-size="8.15" fill="#5a5a62" text-anchor="end">25.000.000,00</text>
<text x="795.20" y="224" font-size="8.15" fill="#5a5a62" text-anchor="end">10.000.000,00</text>
<text x="932.20" y="224" font-size="8.15" fill="#5a5a62" text-anchor="end">10.000.000,00</text>
<text x="956.00" y="224" font-size="8.15" fill="#5a5a62" text-anchor="middle">40,00</text>
<text x="1000.00" y="224" font-size="8.15" fill="#5a5a62" text-anchor="middle">40,00</text>
<text x="31.60" y="238" font-size="8.15" fill="#55555f" textLength="193.90" lengthAdjust="spacingAndGlyphs">591-Deprem Performans Analizi Yapılması Faaliyetleri</text>
<text x="382.20" y="238" font-size="8.15" fill="#5a5a62" text-anchor="end">5.000.000,00</text>
<text x="520.20" y="238" font-size="8.15" fill="#5a5a62" text-anchor="end">5.000.000,00</text>
<text x="589.20" y="238" font-size="8.15" fill="#5a5a62" text-anchor="end">5.000.000,00</text>
<text x="726.20" y="238" font-size="8.15" fill="#5a5a62" text-anchor="end">5.000.000,00</text>
<text x="795.20" y="238" font-size="8.15" fill="#5a5a62" text-anchor="end">1.402.084,80</text>
<text x="932.20" y="238" font-size="8.15" fill="#5a5a62" text-anchor="end">1.402.084,80</text>
<text x="956.00" y="238" font-size="8.15" fill="#5a5a62" text-anchor="middle">28,04</text>
<text x="1000.00" y="238" font-size="8.15" fill="#5a5a62" text-anchor="middle">28,04</text>
<text x="31.60" y="252" font-size="8.15" fill="#55555f" textLength="198.90" lengthAdjust="spacingAndGlyphs">592-Yer ve Afet Bilgi Sistemi Oluşturulması Faaliyetleri</text>
<text x="382.20" y="252" font-size="8.15" fill="#5a5a62" text-anchor="end">0,00</text>
<text x="520.20" y="252" font-size="8.15" fill="#5a5a62" text-anchor="end">0,00</text>
<text x="589.20" y="252" font-size="8.15" fill="#5a5a62" text-anchor="end">0,00</text>
<text x="726.20" y="252" font-size="8.15" fill="#5a5a62" text-anchor="end">0,00</text>
<text x="795.20" y="252" font-size="8.15" fill="#5a5a62" text-anchor="end">0,00</text>
<text x="932.20" y="252" font-size="8.15" fill="#5a5a62" text-anchor="end">0,00</text>
<text x="31.60" y="266" font-size="8.15" fill="#55555f" textLength="147.60" lengthAdjust="spacingAndGlyphs">605-Afet İşleri Hizmetlerinin Yürütülmesi</text>
<text x="382.20" y="266" font-size="8.15" fill="#5a5a62" text-anchor="end">44.045.000,00</text>
<text x="520.20" y="266" font-size="8.15" fill="#5a5a62" text-anchor="end">44.045.000,00</text>
<text x="589.20" y="266" font-size="8.15" fill="#5a5a62" text-anchor="end">51.580.000,00</text>
<text x="726.20" y="266" font-size="8.15" fill="#5a5a62" text-anchor="end">51.580.000,00</text>
<text x="795.20" y="266" font-size="8.15" fill="#5a5a62" text-anchor="end">37.521.045,99</text>
<text x="932.20" y="266" font-size="8.15" fill="#5a5a62" text-anchor="end">37.521.045,99</text>
<text x="956.00" y="266" font-size="8.15" fill="#5a5a62" text-anchor="middle">85,19</text>
<text x="1000.00" y="266" font-size="8.15" fill="#5a5a62" text-anchor="middle">72,74</text>
<text x="31.60" y="280" font-size="8.15" fill="#55555f" textLength="269.60" lengthAdjust="spacingAndGlyphs">818-Afet ve Acil Durumlarda Müdahale Hizmetlerinin Yürütülmesi Faaliyeti</text>
<text x="382.20" y="280" font-size="8.15" fill="#5a5a62" text-anchor="end">2.592.654.000,00</text>
<text x="520.20" y="280" font-size="8.15" fill="#5a5a62" text-anchor="end">2.592.654.000,00</text>
<text x="589.20" y="280" font-size="8.15" fill="#5a5a62" text-anchor="end">2.772.707.000,00</text>
<text x="726.20" y="280" font-size="8.15" fill="#5a5a62" text-anchor="end">2.772.707.000,00</text>
<text x="795.20" y="280" font-size="8.15" fill="#5a5a62" text-anchor="end">2.552.548.531,77</text>
<text x="932.20" y="280" font-size="8.15" fill="#5a5a62" text-anchor="end">2.552.548.531,77</text>
<text x="956.00" y="280" font-size="8.15" fill="#5a5a62" text-anchor="middle">98,45</text>
<text x="1000.00" y="280" font-size="8.15" fill="#5a5a62" text-anchor="middle">92,06</text>
<text x="31.60" y="294" font-size="8.15" fill="#55555f" textLength="248.60" lengthAdjust="spacingAndGlyphs">821- Afet ve Acil Durumlar Öncesi Hazırlık Hizmetlerinin Yürütülmesi</text>
<text x="382.20" y="294" font-size="8.15" fill="#5a5a62" text-anchor="end">186.005.000,00</text>
<text x="520.20" y="294" font-size="8.15" fill="#5a5a62" text-anchor="end">186.005.000,00</text>
<text x="589.20" y="294" font-size="8.15" fill="#5a5a62" text-anchor="end">195.310.000,00</text>
<text x="726.20" y="294" font-size="8.15" fill="#5a5a62" text-anchor="end">195.310.000,00</text>
<text x="795.20" y="294" font-size="8.15" fill="#5a5a62" text-anchor="end">119.282.100,35</text>
<text x="932.20" y="294" font-size="8.15" fill="#5a5a62" text-anchor="end">119.282.100,35</text>
<text x="956.00" y="294" font-size="8.15" fill="#5a5a62" text-anchor="middle">64,13</text>
<text x="1000.00" y="294" font-size="8.15" fill="#5a5a62" text-anchor="middle">61,07</text>
<text x="31.60" y="308" font-size="8.15" fill="#55555f" textLength="276.70" lengthAdjust="spacingAndGlyphs">967-Deprem Risk Yönetimi ve Kentsel İyileştirme Faaliyetlerinin Yürütülmesi</text>
<text x="382.20" y="308" font-size="8.15" fill="#5a5a62" text-anchor="end">82.934.000,00</text>
<text x="520.20" y="308" font-size="8.15" fill="#5a5a62" text-anchor="end">82.934.000,00</text>
<text x="589.20" y="308" font-size="8.15" fill="#5a5a62" text-anchor="end">87.146.000,00</text>
<text x="726.20" y="308" font-size="8.15" fill="#5a5a62" text-anchor="end">87.146.000,00</text>
<text x="795.20" y="308" font-size="8.15" fill="#5a5a62" text-anchor="end">62.410.273,15</text>
<text x="932.20" y="308" font-size="8.15" fill="#5a5a62" text-anchor="end">62.410.273,15</text>
<text x="956.00" y="308" font-size="8.15" fill="#5a5a62" text-anchor="middle">75,25</text>
<text x="1000.00" y="308" font-size="8.15" fill="#5a5a62" text-anchor="middle">71,62</text>
<text x="31.60" y="322" font-size="8.5" fill="#26262e" stroke="#26262e" stroke-width="0.22" textLength="281.60" lengthAdjust="spacing">Stratejik Hedef 5.2: Yeni Gelişme Alanlarının Çevresel Etkilerini Azaltmak</text>
<text x="31.60" y="332" font-size="8.5" fill="#26262e" stroke="#26262e" stroke-width="0.22" textLength="273.90" lengthAdjust="spacing">ve Mevcut Kentsel Alanların Dayanıklılığını Artırmak İçin Sürdürülebilir</text>
<text x="31.60" y="341" font-size="8.5" fill="#26262e" stroke="#26262e" stroke-width="0.22" textLength="124.90" lengthAdjust="spacing">Planlama Stratejileri Geliştirmek</text>
<text x="382.20" y="332" font-size="8.23" fill="#2d2d35" text-anchor="end" stroke="#2d2d35" stroke-width="0.1">1.808.590.000,00</text>
<text x="451.20" y="332" font-size="8.23" fill="#2d2d35" text-anchor="end" stroke="#2d2d35" stroke-width="0.1">0,00</text>
<text x="520.20" y="332" font-size="8.23" fill="#2d2d35" text-anchor="end" stroke="#2d2d35" stroke-width="0.1">1.808.590.000,00</text>
<text x="589.20" y="332" font-size="8.23" fill="#2d2d35" text-anchor="end" stroke="#2d2d35" stroke-width="0.1">1.258.282.000,00</text>
<text x="658.20" y="332" font-size="8.23" fill="#2d2d35" text-anchor="end" stroke="#2d2d35" stroke-width="0.1">0,00</text>
<text x="726.20" y="332" font-size="8.23" fill="#2d2d35" text-anchor="end" stroke="#2d2d35" stroke-width="0.1">1.258.282.000,00</text>
<text x="795.20" y="332" font-size="8.23" fill="#2d2d35" text-anchor="end" stroke="#2d2d35" stroke-width="0.1">886.553.707,16</text>
<text x="864.20" y="332" font-size="8.23" fill="#2d2d35" text-anchor="end" stroke="#2d2d35" stroke-width="0.1">0,00</text>
<text x="932.20" y="332" font-size="8.23" fill="#2d2d35" text-anchor="end" stroke="#2d2d35" stroke-width="0.1">886.553.707,16</text>
<text x="956.00" y="332" font-size="8.23" fill="#2d2d35" text-anchor="middle" stroke="#2d2d35" stroke-width="0.1">49,02</text>
<text x="1000.00" y="332" font-size="8.23" fill="#2d2d35" text-anchor="middle" stroke="#2d2d35" stroke-width="0.1">70,46</text>
<text x="31.60" y="355" font-size="8.5" fill="#26262e" stroke="#26262e" stroke-width="0.22" textLength="264.80" lengthAdjust="spacing">Perf. Hedefi 5.2.1: Yeni Gelişme Alanları ile Mevcut Kentsel Alanların</text>
<text x="31.60" y="364" font-size="8.5" fill="#26262e" stroke="#26262e" stroke-width="0.22" textLength="243.80" lengthAdjust="spacing">Dayanıklılığını Artırmak İçin Sürdürülebilir Planlama Stratejileri</text>
<text x="31.60" y="373" font-size="8.5" fill="#26262e" stroke="#26262e" stroke-width="0.22" textLength="102.00" lengthAdjust="spacing">Geliştirmek ve Uygulamak</text>
<text x="382.20" y="364" font-size="8.23" fill="#2d2d35" text-anchor="end" stroke="#2d2d35" stroke-width="0.1">1.808.590.000,00</text>
<text x="451.20" y="364" font-size="8.23" fill="#2d2d35" text-anchor="end" stroke="#2d2d35" stroke-width="0.1">0,00</text>
<text x="520.20" y="364" font-size="8.23" fill="#2d2d35" text-anchor="end" stroke="#2d2d35" stroke-width="0.1">1.808.590.000,00</text>
<text x="589.20" y="364" font-size="8.23" fill="#2d2d35" text-anchor="end" stroke="#2d2d35" stroke-width="0.1">1.258.282.000,00</text>
<text x="658.20" y="364" font-size="8.23" fill="#2d2d35" text-anchor="end" stroke="#2d2d35" stroke-width="0.1">0,00</text>
<text x="726.20" y="364" font-size="8.23" fill="#2d2d35" text-anchor="end" stroke="#2d2d35" stroke-width="0.1">1.258.282.000,00</text>
<text x="795.20" y="364" font-size="8.23" fill="#2d2d35" text-anchor="end" stroke="#2d2d35" stroke-width="0.1">886.553.707,16</text>
<text x="864.20" y="364" font-size="8.23" fill="#2d2d35" text-anchor="end" stroke="#2d2d35" stroke-width="0.1">0,00</text>
<text x="932.20" y="364" font-size="8.23" fill="#2d2d35" text-anchor="end" stroke="#2d2d35" stroke-width="0.1">886.553.707,16</text>
<text x="956.00" y="364" font-size="8.23" fill="#2d2d35" text-anchor="middle" stroke="#2d2d35" stroke-width="0.1">49,02</text>
<text x="1000.00" y="364" font-size="8.23" fill="#2d2d35" text-anchor="middle" stroke="#2d2d35" stroke-width="0.1">70,46</text>
<text x="31.60" y="387" font-size="8.15" fill="#55555f" textLength="101.50" lengthAdjust="spacingAndGlyphs">52-Kamulaştırma Faaliyetleri</text>
<text x="382.20" y="387" font-size="8.15" fill="#5a5a62" text-anchor="end">1.350.000.000,00</text>
<text x="520.20" y="387" font-size="8.15" fill="#5a5a62" text-anchor="end">1.350.000.000,00</text>
<text x="589.20" y="387" font-size="8.15" fill="#5a5a62" text-anchor="end">784.000.000,00</text>
<text x="726.20" y="387" font-size="8.15" fill="#5a5a62" text-anchor="end">784.000.000,00</text>
<text x="795.20" y="387" font-size="8.15" fill="#5a5a62" text-anchor="end">545.316.423,29</text>
<text x="932.20" y="387" font-size="8.15" fill="#5a5a62" text-anchor="end">545.316.423,29</text>
<text x="956.00" y="387" font-size="8.23" fill="#2d2d35" text-anchor="middle" stroke="#2d2d35" stroke-width="0.1">40,39</text>
<text x="1000.00" y="387" font-size="8.23" fill="#2d2d35" text-anchor="middle" stroke="#2d2d35" stroke-width="0.1">69,56</text>
<text x="31.60" y="401" font-size="8.15" fill="#55555f" textLength="174.50" lengthAdjust="spacingAndGlyphs">167-İmar ve Şehircilik Hizmetlerinin Yürütülmesi</text>
<text x="382.20" y="401" font-size="8.15" fill="#5a5a62" text-anchor="end">59.561.000,00</text>
<text x="520.20" y="401" font-size="8.15" fill="#5a5a62" text-anchor="end">59.561.000,00</text>
<text x="589.20" y="401" font-size="8.15" fill="#5a5a62" text-anchor="end">62.278.000,00</text>
<text x="726.20" y="401" font-size="8.15" fill="#5a5a62" text-anchor="end">62.278.000,00</text>
<text x="795.20" y="401" font-size="8.15" fill="#5a5a62" text-anchor="end">58.988.929,42</text>
<text x="932.20" y="401" font-size="8.15" fill="#5a5a62" text-anchor="end">58.988.929,42</text>
<text x="956.00" y="401" font-size="8.23" fill="#2d2d35" text-anchor="middle" stroke="#2d2d35" stroke-width="0.1">99,04</text>
<text x="1000.00" y="401" font-size="8.23" fill="#2d2d35" text-anchor="middle" stroke="#2d2d35" stroke-width="0.1">94,72</text>
<text x="31.60" y="415" font-size="8.15" fill="#55555f" textLength="136.60" lengthAdjust="spacingAndGlyphs">416- 5 Yıllık İmar Programı Faaliyetleri</text>
<text x="382.20" y="415" font-size="8.15" fill="#5a5a62" text-anchor="end">0,00</text>
<text x="520.20" y="415" font-size="8.15" fill="#5a5a62" text-anchor="end">0,00</text>
<text x="589.20" y="415" font-size="8.15" fill="#5a5a62" text-anchor="end">0,00</text>
<text x="726.20" y="415" font-size="8.15" fill="#5a5a62" text-anchor="end">0,00</text>
<text x="795.20" y="415" font-size="8.15" fill="#5a5a62" text-anchor="end">0,00</text>
<text x="932.20" y="415" font-size="8.15" fill="#5a5a62" text-anchor="end">0,00</text>
<text x="31.60" y="429" font-size="8.15" fill="#55555f" textLength="238.00" lengthAdjust="spacingAndGlyphs">491-Yerinde ve Uzlaşmaya Dayalı Kentsel Dönüşüm Hizmetlerinin</text>
<text x="31.60" y="438" font-size="8.15" fill="#55555f" textLength="43.60" lengthAdjust="spacingAndGlyphs">Yürütülmesi</text>
<text x="382.20" y="434" font-size="8.15" fill="#5a5a62" text-anchor="end">395.789.000,00</text>
<text x="520.20" y="434" font-size="8.15" fill="#5a5a62" text-anchor="end">395.789.000,00</text>
<text x="589.20" y="434" font-size="8.15" fill="#5a5a62" text-anchor="end">408.001.000,00</text>
<text x="726.20" y="434" font-size="8.15" fill="#5a5a62" text-anchor="end">408.001.000,00</text>
<text x="795.20" y="434" font-size="8.15" fill="#5a5a62" text-anchor="end">282.248.354,45</text>
<text x="932.20" y="434" font-size="8.15" fill="#5a5a62" text-anchor="end">282.248.354,45</text>
<text x="956.00" y="434" font-size="8.15" fill="#5a5a62" text-anchor="middle">71,31</text>
<text x="1000.00" y="434" font-size="8.15" fill="#5a5a62" text-anchor="middle">69,18</text>
<text x="31.60" y="452" font-size="8.15" fill="#55555f" textLength="278.90" lengthAdjust="spacingAndGlyphs">581-İzmir İl Bütününü Kapsayan Yeni Bir 1/25000 Ölçekli Nazım İmar Planı ve</text>
<text x="31.60" y="462" font-size="8.15" fill="#55555f" textLength="115.50" lengthAdjust="spacingAndGlyphs">Revizyonu Yapılması Faaliyetleri</text>
<text x="382.20" y="457" font-size="8.15" fill="#5a5a62" text-anchor="end">3.240.000,00</text>
<text x="520.20" y="457" font-size="8.15" fill="#5a5a62" text-anchor="end">3.240.000,00</text>
<text x="589.20" y="457" font-size="8.15" fill="#5a5a62" text-anchor="end">4.003.000,00</text>
<text x="726.20" y="457" font-size="8.15" fill="#5a5a62" text-anchor="end">4.003.000,00</text>
<text x="795.20" y="457" font-size="8.15" fill="#5a5a62" text-anchor="end">0,00</text>
<text x="932.20" y="457" font-size="8.15" fill="#5a5a62" text-anchor="end">0,00</text>
<text x="956.00" y="457" font-size="8.15" fill="#5a5a62" text-anchor="middle">0,00</text>
<text x="1000.00" y="457" font-size="8.15" fill="#5a5a62" text-anchor="middle">0,00</text>
<text x="31.60" y="476" font-size="8.15" fill="#55555f" textLength="279.80" lengthAdjust="spacingAndGlyphs">595-İmar ve Şehircilik Dairesi Başkanlığı Arşivinin Dijitalleştirilmesi Faaliyetleri</text>
<text x="382.20" y="476" font-size="8.15" fill="#5a5a62" text-anchor="end">0,00</text>
<text x="520.20" y="476" font-size="8.15" fill="#5a5a62" text-anchor="end">0,00</text>
<text x="589.20" y="476" font-size="8.15" fill="#5a5a62" text-anchor="end">0,00</text>
<text x="726.20" y="476" font-size="8.15" fill="#5a5a62" text-anchor="end">0,00</text>
<text x="795.20" y="476" font-size="8.15" fill="#5a5a62" text-anchor="end">0,00</text>
<text x="932.20" y="476" font-size="8.15" fill="#5a5a62" text-anchor="end">0,00</text>
<text x="31.60" y="490" font-size="8.5" fill="#26262e" stroke="#26262e" stroke-width="0.22" textLength="86.00" lengthAdjust="spacing">Stratejik Alan Toplamı</text>
<text x="382.20" y="490" font-size="8.23" fill="#2d2d35" text-anchor="end" stroke="#2d2d35" stroke-width="0.1">4.891.628.000,00</text>
<text x="451.20" y="490" font-size="8.23" fill="#2d2d35" text-anchor="end" stroke="#2d2d35" stroke-width="0.1">0,00</text>
<text x="520.20" y="490" font-size="8.23" fill="#2d2d35" text-anchor="end" stroke="#2d2d35" stroke-width="0.1">4.891.628.000,00</text>
<text x="589.20" y="490" font-size="8.23" fill="#2d2d35" text-anchor="end" stroke="#2d2d35" stroke-width="0.1">4.542.425.000,00</text>
<text x="658.20" y="490" font-size="8.23" fill="#2d2d35" text-anchor="end" stroke="#2d2d35" stroke-width="0.1">0,00</text>
<text x="726.20" y="490" font-size="8.23" fill="#2d2d35" text-anchor="end" stroke="#2d2d35" stroke-width="0.1">4.542.425.000,00</text>
<text x="795.20" y="490" font-size="8.23" fill="#2d2d35" text-anchor="end" stroke="#2d2d35" stroke-width="0.1">3.700.719.531,34</text>
<text x="864.20" y="490" font-size="8.23" fill="#2d2d35" text-anchor="end" stroke="#2d2d35" stroke-width="0.1">0,00</text>
<text x="932.20" y="490" font-size="8.23" fill="#2d2d35" text-anchor="end" stroke="#2d2d35" stroke-width="0.1">3.700.719.531,34</text>
<text x="956.00" y="490" font-size="8.23" fill="#2d2d35" text-anchor="middle" stroke="#2d2d35" stroke-width="0.1">75,65</text>
<text x="1000.00" y="490" font-size="8.23" fill="#2d2d35" text-anchor="middle" stroke="#2d2d35" stroke-width="0.1">81,47</text>
<text x="31.60" y="520" font-size="8.6" fill="#3a3a42" stroke="#3a3a42" stroke-width="0.12" textLength="64.00" lengthAdjust="spacingAndGlyphs">Faaliyet Toplamı</text>
<text x="382.20" y="520" font-size="8.15" fill="#3a3a42" text-anchor="end" stroke="#3a3a42" stroke-width="0.16" textLength="64.80" lengthAdjust="spacingAndGlyphs">49.959.499.000,00</text>
<text x="451.20" y="520" font-size="8.15" fill="#3a3a42" text-anchor="end" stroke="#3a3a42" stroke-width="0.16" textLength="64.80" lengthAdjust="spacingAndGlyphs">11.453.000.000,00</text>
<text x="520.20" y="520" font-size="8.15" fill="#3a3a42" text-anchor="end" stroke="#3a3a42" stroke-width="0.16" textLength="64.80" lengthAdjust="spacingAndGlyphs">61.412.499.000,00</text>
<text x="589.20" y="520" font-size="8.15" fill="#3a3a42" text-anchor="end" stroke="#3a3a42" stroke-width="0.16" textLength="64.80" lengthAdjust="spacingAndGlyphs">51.127.235.651,99</text>
<text x="658.20" y="520" font-size="8.15" fill="#3a3a42" text-anchor="end" stroke="#3a3a42" stroke-width="0.16">9.162.000.000,00</text>
<text x="726.20" y="520" font-size="8.15" fill="#3a3a42" text-anchor="end" stroke="#3a3a42" stroke-width="0.16" textLength="64.80" lengthAdjust="spacingAndGlyphs">60.289.235.651,99</text>
<text x="795.20" y="520" font-size="8.15" fill="#3a3a42" text-anchor="end" stroke="#3a3a42" stroke-width="0.16" textLength="64.80" lengthAdjust="spacingAndGlyphs">42.468.789.489,33</text>
<text x="864.20" y="520" font-size="8.15" fill="#3a3a42" text-anchor="end" stroke="#3a3a42" stroke-width="0.16">5.525.124.626,24</text>
<text x="932.20" y="520" font-size="8.15" fill="#3a3a42" text-anchor="end" stroke="#3a3a42" stroke-width="0.16" textLength="64.80" lengthAdjust="spacingAndGlyphs">47.993.914.115,57</text>
<text x="956.00" y="520" font-size="8.15" fill="#3a3a42" text-anchor="middle" stroke="#3a3a42" stroke-width="0.16">78,15</text>
<text x="1000.00" y="520" font-size="8.15" fill="#3a3a42" text-anchor="middle" stroke="#3a3a42" stroke-width="0.16">79,61</text>
<text x="31.60" y="538" font-size="8.6" fill="#3a3a42" stroke="#3a3a42" stroke-width="0.12" textLength="118.00" lengthAdjust="spacingAndGlyphs">Genel Yönetim Gideri Toplamı</text>
<text x="382.20" y="538" font-size="8.15" fill="#3a3a42" text-anchor="end" stroke="#3a3a42" stroke-width="0.16" textLength="64.80" lengthAdjust="spacingAndGlyphs">12.883.651.000,00</text>
<text x="451.20" y="538" font-size="8.15" fill="#3a3a42" text-anchor="end" stroke="#3a3a42" stroke-width="0.16">0,00</text>
<text x="520.20" y="538" font-size="8.15" fill="#3a3a42" text-anchor="end" stroke="#3a3a42" stroke-width="0.16" textLength="64.80" lengthAdjust="spacingAndGlyphs">12.883.651.000,00</text>
<text x="589.20" y="538" font-size="8.15" fill="#3a3a42" text-anchor="end" stroke="#3a3a42" stroke-width="0.16">9.960.797.348,01</text>
<text x="658.20" y="538" font-size="8.15" fill="#3a3a42" text-anchor="end" stroke="#3a3a42" stroke-width="0.16">0,00</text>
<text x="726.20" y="538" font-size="8.15" fill="#3a3a42" text-anchor="end" stroke="#3a3a42" stroke-width="0.16">9.960.797.348,01</text>
<text x="795.20" y="538" font-size="8.15" fill="#3a3a42" text-anchor="end" stroke="#3a3a42" stroke-width="0.16">9.210.080.742,44</text>
<text x="864.20" y="538" font-size="8.15" fill="#3a3a42" text-anchor="end" stroke="#3a3a42" stroke-width="0.16">0,00</text>
<text x="932.20" y="538" font-size="8.15" fill="#3a3a42" text-anchor="end" stroke="#3a3a42" stroke-width="0.16">9.210.080.742,44</text>
<text x="956.00" y="538" font-size="8.15" fill="#3a3a42" text-anchor="middle" stroke="#3a3a42" stroke-width="0.16">71,49</text>
<text x="1000.00" y="538" font-size="8.15" fill="#3a3a42" text-anchor="middle" stroke="#3a3a42" stroke-width="0.16">92,46</text>
<text x="31.60" y="557" font-size="8.6" fill="#3a3a42" stroke="#3a3a42" stroke-width="0.12" textLength="136.50" lengthAdjust="spacingAndGlyphs">Diğer İdarelere Transferler Toplamı</text>
<text x="382.20" y="557" font-size="8.15" fill="#3a3a42" text-anchor="end" stroke="#3a3a42" stroke-width="0.16" textLength="64.80" lengthAdjust="spacingAndGlyphs">17.003.850.000,00</text>
<text x="451.20" y="557" font-size="8.15" fill="#3a3a42" text-anchor="end" stroke="#3a3a42" stroke-width="0.16">0,00</text>
<text x="520.20" y="557" font-size="8.15" fill="#3a3a42" text-anchor="end" stroke="#3a3a42" stroke-width="0.16" textLength="64.80" lengthAdjust="spacingAndGlyphs">17.003.850.000,00</text>
<text x="589.20" y="557" font-size="8.15" fill="#3a3a42" text-anchor="end" stroke="#3a3a42" stroke-width="0.16" textLength="64.80" lengthAdjust="spacingAndGlyphs">21.049.967.000,00</text>
<text x="658.20" y="557" font-size="8.15" fill="#3a3a42" text-anchor="end" stroke="#3a3a42" stroke-width="0.16">0,00</text>
<text x="726.20" y="557" font-size="8.15" fill="#3a3a42" text-anchor="end" stroke="#3a3a42" stroke-width="0.16" textLength="64.80" lengthAdjust="spacingAndGlyphs">21.049.967.000,00</text>
<text x="795.20" y="557" font-size="8.15" fill="#3a3a42" text-anchor="end" stroke="#3a3a42" stroke-width="0.16" textLength="64.80" lengthAdjust="spacingAndGlyphs">20.640.709.736,26</text>
<text x="864.20" y="557" font-size="8.15" fill="#3a3a42" text-anchor="end" stroke="#3a3a42" stroke-width="0.16">0,00</text>
<text x="932.20" y="557" font-size="8.15" fill="#3a3a42" text-anchor="end" stroke="#3a3a42" stroke-width="0.16" textLength="64.80" lengthAdjust="spacingAndGlyphs">20.640.709.736,26</text>
<text x="956.00" y="557" font-size="8.15" fill="#3a3a42" text-anchor="middle" stroke="#3a3a42" stroke-width="0.16">121,39</text>
<text x="1000.00" y="557" font-size="8.15" fill="#3a3a42" text-anchor="middle" stroke="#3a3a42" stroke-width="0.16">98,06</text>
<text x="31.60" y="575" font-size="8.6" fill="#3a3a42" stroke="#3a3a42" stroke-width="0.12" textLength="81.10" lengthAdjust="spacingAndGlyphs">Genel Bütçe Toplamı</text>
<text x="382.20" y="575" font-size="8.15" fill="#3a3a42" text-anchor="end" stroke="#3a3a42" stroke-width="0.16" textLength="64.80" lengthAdjust="spacingAndGlyphs">79.847.000.000,00</text>
<text x="451.20" y="575" font-size="8.15" fill="#3a3a42" text-anchor="end" stroke="#3a3a42" stroke-width="0.16" textLength="64.80" lengthAdjust="spacingAndGlyphs">11.453.000.000,00</text>
<text x="520.20" y="575" font-size="8.15" fill="#3a3a42" text-anchor="end" stroke="#3a3a42" stroke-width="0.16" textLength="64.80" lengthAdjust="spacingAndGlyphs">91.300.000.000,00</text>
<text x="589.20" y="575" font-size="8.15" fill="#3a3a42" text-anchor="end" stroke="#3a3a42" stroke-width="0.16" textLength="64.80" lengthAdjust="spacingAndGlyphs">82.138.000.000,00</text>
<text x="658.20" y="575" font-size="8.15" fill="#3a3a42" text-anchor="end" stroke="#3a3a42" stroke-width="0.16">9.162.000.000,00</text>
<text x="726.20" y="575" font-size="8.15" fill="#3a3a42" text-anchor="end" stroke="#3a3a42" stroke-width="0.16" textLength="64.80" lengthAdjust="spacingAndGlyphs">91.300.000.000,00</text>
<text x="795.20" y="575" font-size="8.15" fill="#3a3a42" text-anchor="end" stroke="#3a3a42" stroke-width="0.16" textLength="64.80" lengthAdjust="spacingAndGlyphs">72.319.579.968,03</text>
<text x="864.20" y="575" font-size="8.15" fill="#3a3a42" text-anchor="end" stroke="#3a3a42" stroke-width="0.16">5.525.124.626,24</text>
<text x="932.20" y="575" font-size="8.15" fill="#3a3a42" text-anchor="end" stroke="#3a3a42" stroke-width="0.16" textLength="64.80" lengthAdjust="spacingAndGlyphs">77.844.704.594,27</text>
<text x="956.00" y="575" font-size="8.15" fill="#3a3a42" text-anchor="middle" stroke="#3a3a42" stroke-width="0.16">85,26</text>
<text x="1000.00" y="575" font-size="8.15" fill="#3a3a42" text-anchor="middle" stroke="#3a3a42" stroke-width="0.16">85,26</text>
</svg>
</body></html>
